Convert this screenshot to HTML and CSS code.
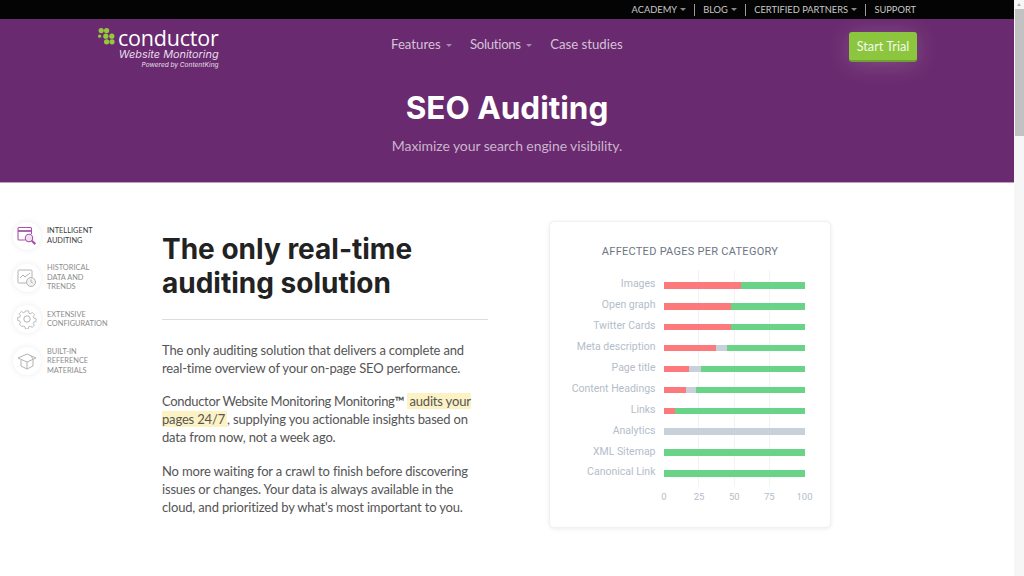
FILE: index.html

```html
<!DOCTYPE html>
<html lang="en">
<head>
    <meta charset="UTF-8">
    <meta name="viewport" content="width=device-width, initial-scale=1.0">
    <title>SEO Auditing - Conductor Website Monitoring</title>
    <link rel="stylesheet" href="styles.css">
</head>
<body>
    <div class="page">
        <div class="topbar">
            <a class="top-link">Academy <span class="caret"></span></a>
            <a class="top-link">Blog <span class="caret"></span></a>
            <a class="top-link">Certified Partners <span class="caret"></span></a>
            <a class="top-link">Support</a>
        </div>

        <header class="hero">
            <div class="navrow">
                <a class="logo">
                    <svg class="logo-dots" width="18" height="17" viewBox="0 0 18 17">
                        <circle cx="3.200" cy="2.600" r="2.600"/><circle cx="8.600" cy="2.600" r="2.600"/>
                        <circle cx="1.600" cy="8.200" r="1.600"/><circle cx="7.800" cy="8.200" r="2.600"/><circle cx="13.800" cy="8.200" r="2.600"/>
                        <circle cx="8.600" cy="13.800" r="2.600"/><circle cx="14" cy="13.800" r="2.600"/>
                    </svg>
                    <span class="logo-text">
                        <span class="logo-name">conductor</span>
                        <span class="logo-sub">Website Monitoring</span>
                        <span class="logo-by">Powered by ContentKing</span>
                    </span>
                </a>
                <nav class="mainnav">
                    <a>Features <span class="caret"></span></a>
                    <a><span class="tight">Solutions</span> <span class="caret"></span></a>
                    <a>Case studies</a>
                </nav>
                <a class="trial">Start Trial</a>
            </div>
            <h1>SEO Auditing</h1>
            <p class="tagline">Maximize your search engine visibility.</p>
        </header>

        <section class="content">
            <ul class="sidenav">
                <li class="active">
                    <span class="bubble">
                        <svg width="20" height="20" viewBox="0 0 20 20" fill="none" stroke="currentColor" stroke-width="1.100">
                            <path d="M14.500 8V2.500a1 1 0 0 0-1-1H2a1 1 0 0 0-1 1V13a1 1 0 0 0 1 1h6"/>
                            <path d="M1 5h13.500" stroke-width="1.800"/>
                            <circle cx="12" cy="12" r="3.700" fill="#f0dff0"/>
                            <path d="M14.800 14.800l3.500 3.300" stroke-width="2.200"/>
                        </svg>
                    </span>
                    <span>Intelligent<br>Auditing</span>
                </li>
                <li>
                    <span class="bubble">
                        <svg width="20" height="20" viewBox="0 0 20 20" fill="none" stroke="currentColor" stroke-width="1">
                            <path d="M9 15H2a1 1 0 0 1-1-1V3a1 1 0 0 1 1-1h12a1 1 0 0 1 1 1v6"/>
                            <path d="M3 10l3-3 2 2 5-4"/>
                            <circle cx="14" cy="14" r="4.500" fill="#f2f2f2"/>
                            <path d="M14 11.500V14l1.800 1"/>
                        </svg>
                    </span>
                    <span>Historical<br>data and<br>trends</span>
                </li>
                <li>
                    <span class="bubble">
                        <svg width="20" height="20" viewBox="0 0 20 20" fill="none" stroke="currentColor" stroke-width="1">
                            <path d="M8.300 1h3.400l.5 2.600 1.600.7 2.200-1.500 2.400 2.400-1.500 2.200.7 1.600 2.400.5v3.400l-2.400.5-.7 1.600 1.200 2.200-2.400 2.100-2.200-1.300-1.600.7-.5 2.300H8.300l-.5-2.300-1.600-.7L4 18.100l-2.400-2.100 1.200-2.200-.7-1.600L-.3 11.700V8.300l2.400-.5.7-1.600-1.500-2.200L3.700 1.600l2.200 1.500 1.600-.7z" transform="translate(1 1) scale(.9)"/>
                            <circle cx="10" cy="10" r="3.200"/>
                        </svg>
                    </span>
                    <span>Extensive<br>configuration</span>
                </li>
                <li>
                    <span class="bubble">
                        <svg width="20" height="20" viewBox="0 0 20 20" fill="none" stroke="currentColor" stroke-width="1">
                            <path d="M1 7l9-4 9 4-9 4z"/>
                            <path d="M4 9v6l6 3 6-3V9"/>
                            <path d="M10 11v7"/>
                            <path d="M14 5l2 3"/>
                        </svg>
                    </span>
                    <span>Built-in<br>reference<br>materials</span>
                </li>
            </ul>

            <article class="copy">
                <h2>The only real-time auditing solution</h2>
                <p>The only auditing solution that delivers a complete and real-time overview of your on-page SEO performance.</p>
                <p><span class="tight">Conductor Website Monitoring Monitoring</span><b>&trade;</b> <mark>audits your pages 24/7</mark>, supplying you actionable insights based on data from now, not a week ago.</p>
                <p>No more waiting for a crawl to finish before discovering issues or changes. Your data is always available in the cloud, and prioritized by what's most important to you.</p>
            </article>

            <div class="card">
                <div class="card-title">Affected pages per category</div>
                <div class="chart">
                    <div class="grid-line" style="left: 24.500%"></div>
                    <div class="grid-line" style="left: 50%"></div>
                    <div class="grid-line" style="left: 74.800%"></div>
                    <div class="row"><span class="label">Images</span><div class="bar"><i class="red" style="width: 55%"></i><i class="green"></i></div></div>
                    <div class="row"><span class="label">Open graph</span><div class="bar"><i class="red" style="width: 48%"></i><i class="green"></i></div></div>
                    <div class="row"><span class="label">Twitter Cards</span><div class="bar"><i class="red" style="width: 48%"></i><i class="green"></i></div></div>
                    <div class="row"><span class="label">Meta description</span><div class="bar"><i class="red" style="width: 37%"></i><i class="grey" style="width: 7.500%"></i><i class="green"></i></div></div>
                    <div class="row"><span class="label">Page title</span><div class="bar"><i class="red" style="width: 17.500%"></i><i class="grey" style="width: 8.500%"></i><i class="green"></i></div></div>
                    <div class="row"><span class="label">Content Headings</span><div class="bar"><i class="red" style="width: 16%"></i><i class="grey" style="width: 7%"></i><i class="green"></i></div></div>
                    <div class="row"><span class="label">Links</span><div class="bar"><i class="red" style="width: 7.500%"></i><i class="green"></i></div></div>
                    <div class="row"><span class="label">Analytics</span><div class="bar"><i class="grey" style="width: 100%"></i></div></div>
                    <div class="row"><span class="label">XML Sitemap</span><div class="bar"><i class="green"></i></div></div>
                    <div class="row"><span class="label">Canonical Link</span><div class="bar"><i class="green"></i></div></div>
                </div>
                <div class="axis">
                    <span>0</span><span>25</span><span>50</span><span>75</span><span>100</span>
                </div>
            </div>
        </section>
    </div>

    <div class="scrollbar">
        <span class="scroll-arrow"></span>
        <span class="scroll-thumb"></span>
    </div>
</body>
</html>
```

FILE: styles.css

```css
* {
    box-sizing: border-box;
}

html, body {
    height: 100%;
}

body {
    margin: 0;
    display: flex;
    overflow: hidden;
    font-family: Lato, "Open Sans", sans-serif;
    font-variant-ligatures: none;
    color: #555;
    background-color: #fff;
}

.page {
    width: 1014px;
    flex: none;
}

/* top black strip */
.topbar {
    height: 19px;
    background-color: #040404;
    display: flex;
    justify-content: flex-end;
    align-items: center;
    padding-right: 98px;
}

.top-link {
    font-size: 9.300px;
    line-height: 12px;
    text-transform: uppercase;
    color: #c8c8c8;
    padding: 0 8px;
    border-left: 1px solid #9a9a9a;
}

.top-link:first-child {
    border-left: none;
}

.top-link:last-child {
    padding-right: 0;
}

.caret {
    display: inline-block;
    width: 0;
    height: 0;
    margin-left: 1px;
    vertical-align: 2px;
    border-left: 3.500px solid transparent;
    border-right: 3.500px solid transparent;
    border-top: 3.500px solid #8a8a8a;
}

/* purple header */
.hero {
    height: 164px;
    background-color: #6a2a6f;
    border-bottom: 1px solid #b99fc2;
    text-align: center;
}

.navrow {
    display: flex;
    align-items: flex-start;
    padding: 8px 97px 0 98px;
}

.logo {
    display: flex;
    width: 120px;
    flex: none;
    text-align: right;
    color: #fff;
}

.logo-dots {
    fill: #95c93d;
    margin-top: 1px;
    margin-right: 2px;
    flex: none;
}

.logo-text {
    display: flex;
    flex-direction: column;
    flex: 1;
}

.logo-name {
    font-family: "Open Sans", sans-serif;
    font-size: 21.500px;
    line-height: 21px;
    letter-spacing: -0.2px;
}

.logo-sub {
    font-family: Inter, sans-serif;
    font-style: italic;
    font-size: 10.900px;
    line-height: 12px;
    color: #e6dcea;
    white-space: nowrap;
}

.logo-by {
    font-family: Inter, sans-serif;
    font-style: italic;
    font-weight: 500;
    font-size: 6.500px;
    line-height: 10px;
    color: #d9cbdd;
    white-space: nowrap;
}

.mainnav {
    display: flex;
    gap: 18px;
    margin-left: 173px;
    padding-top: 9px;
    font-size: 13.200px;
    line-height: 16px;
    color: #d3c3d7;
}

.mainnav .caret {
    margin-left: 2px;
    border-top-color: #a488ad;
}

.mainnav .tight {
    letter-spacing: -0.3px;
}

.trial {
    margin-left: auto;
    margin-top: 5px;
    width: 68px;
    height: 30px;
    background-color: #8cc63f;
    border-bottom: 2px solid #70a032;
    border-radius: 3px;
    box-shadow: 0 2px 24px rgba(255, 255, 255, 0.18);
    color: #f3f8ea;
    font-size: 12.700px;
    line-height: 28px;
    text-align: center;
}

h1 {
    margin: 18px 0 0;
    font-family: Inter, sans-serif;
    font-size: 31.500px;
    line-height: 40px;
    font-weight: 700;
    color: #fff;
}

.tagline {
    margin: 9px 0 0;
    font-size: 14px;
    line-height: 18px;
    letter-spacing: -0.08px;
    color: #c9b5ce;
}

/* body of the page */
.content {
    display: flex;
    align-items: flex-start;
    padding: 38px 0 0 13px;
}

.sidenav {
    list-style: none;
    margin: 0;
    padding: 0;
    width: 149px;
    flex: none;
    display: flex;
    flex-direction: column;
    gap: 11.700px;
    font-size: 7.400px;
    line-height: 9.600px;
    text-transform: uppercase;
    color: #8d8d8d;
}

.sidenav li {
    display: flex;
    align-items: center;
    gap: 6px;
    min-height: 30px;
}

.sidenav li.active {
    color: #3b3b3b;
}

.bubble {
    width: 28px;
    height: 28px;
    border-radius: 50%;
    flex: none;
    display: flex;
    align-items: center;
    justify-content: center;
    box-shadow: 0 0 6px rgba(0, 0, 0, 0.08);
    color: #b3b3b3;
}

.active .bubble {
    color: #a653a8;
}

.copy {
    width: 326px;
    flex: none;
    font-size: 13px;
    line-height: 18px;
    letter-spacing: -0.17px;
}

.copy .tight {
    letter-spacing: -0.3px;
}

h2 {
    margin: 11px 0 0;
    padding-bottom: 19px;
    border-bottom: 1px solid #ddd;
    font-family: Inter, sans-serif;
    font-size: 28px;
    line-height: 34px;
    font-weight: 700;
    letter-spacing: 0;
    color: #222;
}

.copy p {
    margin: 0 0 15.500px;
}

.copy h2 + p {
    margin-top: 20.500px;
}

mark {
    background-color: #fdf2c4;
    color: inherit;
    padding: 0 2px;
}

/* chart card */
.card {
    width: 282px;
    height: 307px;
    flex: none;
    margin-left: 61px;
    padding-top: 23px;
    background-color: #fff;
    border: 1px solid #f1f1f3;
    border-radius: 5px;
    box-shadow: 0 1px 4px rgba(0, 0, 0, 0.08);
    font-family: Roboto, sans-serif;
}

.card-title {
    font-size: 11px;
    line-height: 14px;
    letter-spacing: 0.270px;
    text-transform: uppercase;
    text-align: center;
    color: #6d7583;
}

.chart {
    position: relative;
    margin: 11px 26px 0 114px;
    width: 140.500px;
    height: 217px;
    padding-top: 5px;
}

.grid-line {
    position: absolute;
    top: 0;
    bottom: 0;
    width: 1px;
    background-color: #f1f2f4;
}

.row {
    display: flex;
    align-items: center;
    height: 20.900px;
    position: relative;
}

.label {
    position: absolute;
    right: 149px;
    top: 2.400px;
    font-size: 10.500px;
    line-height: 14px;
    white-space: nowrap;
    color: #b4bdca;
}

.bar {
    display: flex;
    width: 100%;
    height: 6.500px;
    position: relative;
}

.bar i {
    display: block;
    height: 100%;
}

.red {
    background-color: #fd7a7c;
}

.green {
    flex: 1;
    background-color: #69d487;
}

.grey {
    background-color: #c8d0da;
}

.axis {
    display: flex;
    justify-content: space-between;
    width: 140.500px;
    margin: 4px 0 0 114px;
    font-size: 9.500px;
    line-height: 12px;
    color: #b4bdca;
}

.axis span {
    width: 0;
    display: flex;
    justify-content: center;
}

/* fake browser scrollbar */
.scrollbar {
    width: 10px;
    flex: none;
    background-color: #f6f6f6;
    position: relative;
}

.scroll-arrow {
    display: block;
    width: 0;
    height: 0;
    margin: 3px auto 0;
    border-left: 2.500px solid transparent;
    border-right: 2.500px solid transparent;
    border-bottom: 3px solid #b0b0b0;
}

.scroll-thumb {
    display: block;
    height: 127px;
    margin: 3px 0 0 1px;
    background-color: #c2c2c2;
}
```
